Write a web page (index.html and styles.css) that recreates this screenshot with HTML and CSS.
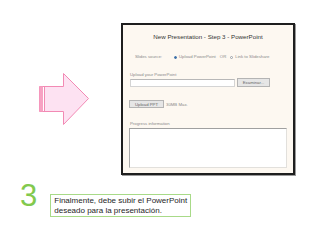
FILE: index.html
```html
<!DOCTYPE html>
<html>
<head>
<meta charset="utf-8">
<link rel="stylesheet" href="styles.css">
</head>
<body>
<div class="slide">
  <div class="top">
    <svg class="arrow" width="50" height="52" viewBox="0 0 50 52">
      <polygon points="0.5,13.5 24.5,13.5 24.5,0.5 49.5,25.5 24.5,51.5 24.5,38.5 0.5,38.5" fill="#fde2f2" stroke="#f28ab4" stroke-width="1"/>
      <rect x="0.5" y="13.5" width="3.5" height="25" fill="#f7a2c3"/>
      <line x1="5.5" y1="13.5" x2="5.5" y2="38.5" stroke="#f28ab4" stroke-width="1"/>
      <line x1="4.5" y1="14" x2="4.5" y2="38" stroke="#ffffff" stroke-width="1"/>
    </svg>
    <div class="shot">
      <div class="title">New Presentation - Step 3 - PowerPoint</div>
      <div class="source">
        <span>Slides source:</span>
        <span class="radio on"></span><span>Upload PowerPoint</span>
        <span>OR</span>
        <span class="radio"></span><span>Link to Slideshare</span>
      </div>
      <div class="label">Upload your PowerPoint</div>
      <div class="filerow">
        <div class="input"></div>
        <div class="btn browse">Examinar...</div>
      </div>
      <div class="uprow">
        <div class="btn upload">Upload PPT</div>
        <span>30MB Max.</span>
      </div>
      <div class="label progress">Progress information</div>
      <div class="area"></div>
    </div>
  </div>
  <div class="bottom">
    <div class="num">3</div>
    <div class="caption">Finalmente, debe subir el PowerPoint<br>deseado para la presentación.</div>
  </div>
</div>
</body>
</html>
```
FILE: styles.css
```css
html, body {
  margin: 0;
  padding: 0;
  background: #ffffff;
}
.slide {
  width: 320px;
  height: 240px;
  padding-top: 23px;
  box-sizing: border-box;
  font-family: "Liberation Sans", Arial, sans-serif;
}
.top {
  display: flex;
  align-items: center;
}
.arrow {
  margin-left: 39px;
  display: block;
}
.shot {
  margin-left: 32px;
  width: 174px;
  height: 152px;
  box-sizing: border-box;
  border: 2px solid #1e1e1e;
  box-shadow: 1px 1px 0 #9a9a9a;
  background: #fdf8f1;
  padding: 8px 6px 0 6px;
  display: flex;
  flex-direction: column;
  color: #8a8a8a;
  font-size: 4.3px;
}
.title {
  text-align: center;
  font-size: 6.2px;
  line-height: 8px;
  color: #333333;
}
.source {
  margin-top: 12px;
  margin-left: 6px;
  height: 8px;
  display: flex;
  align-items: center;
  gap: 2px;
  line-height: 8px;
}
.source span:nth-child(2) {
  margin-left: 10px;
}
.source span:nth-child(4), .source span:nth-child(5) {
  margin-left: 2px;
}
.radio {
  width: 3px;
  height: 3px;
  border-radius: 50%;
  border: 0.5px solid #9aa0a8;
  background: #ffffff;
  box-sizing: border-box;
}
.radio.on {
  background: #3a6ea8;
  border-color: #3a6ea8;
}
.label {
  margin-top: 11px;
  margin-left: 1px;
  line-height: 6px;
}
.filerow {
  display: flex;
  align-items: flex-start;
  margin-left: 1px;
  gap: 2px;
}
.input {
  width: 105px;
  height: 8px;
  margin-top: 1px;
  background: #ffffff;
  border: 1px solid #d4d4d4;
  border-top-color: #b8b8b8;
  box-sizing: border-box;
}
.btn {
  box-sizing: border-box;
  background: #e6e6e6;
  border: 1px solid #b4b4b4;
  color: #666666;
  font-size: 4.3px;
  display: flex;
  align-items: center;
  justify-content: center;
}
.browse {
  width: 33px;
  height: 9px;
}
.uprow {
  margin-top: 13px;
  display: flex;
  align-items: center;
  gap: 2px;
}
.upload {
  width: 35px;
  height: 8px;
}
.progress {
  margin-top: 13px;
}
.area {
  margin-top: 1px;
  width: 158px;
  height: 40px;
  background: #ffffff;
  border: 1px solid #e2e0dc;
  border-top-color: #a0a0a0;
  border-left-color: #a8a8a8;
  box-sizing: border-box;
}
.bottom {
  display: flex;
  align-items: flex-start;
  margin-top: 5px;
  padding-left: 20px;
}
.num {
  font-size: 31px;
  line-height: 31px;
  color: #82c94e;
}
.caption {
  margin-left: 13px;
  margin-top: 14px;
  width: 141px;
  height: 23px;
  box-sizing: border-box;
  border: 1px solid #a8da88;
  padding: 1px 0 0 3px;
  font-size: 8px;
  line-height: 10px;
  color: #1e1e1e;
}
```
